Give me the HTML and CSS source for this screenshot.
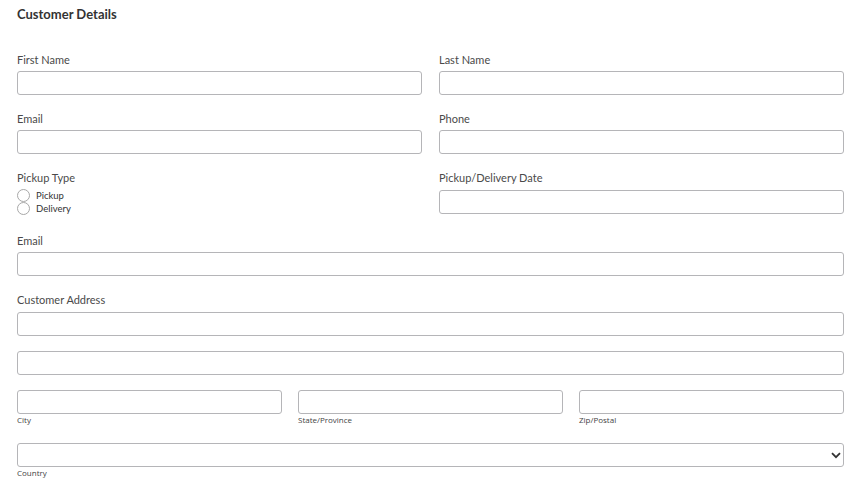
FILE: index.html
```html
<!DOCTYPE html>
<html>
<head>
<meta charset="utf-8">
<link rel="stylesheet" href="styles.css">
</head>
<body>
<form class="form">
  <h2 class="title">Customer Details</h2>
  <div class="grid2">
    <div class="field"><label class="label">First Name</label><input class="input" type="text"></div>
    <div class="field"><label class="label">Last Name</label><input class="input" type="text"></div>
    <div class="field"><label class="label">Email</label><input class="input" type="text"></div>
    <div class="field"><label class="label">Phone</label><input class="input" type="text"></div>
    <div class="field">
      <label class="label">Pickup Type</label>
      <div class="radios">
        <label class="radio"><input type="radio" name="pt" class="radio-input"><span>Pickup</span></label>
        <label class="radio"><input type="radio" name="pt" class="radio-input"><span>Delivery</span></label>
      </div>
    </div>
    <div class="field"><label class="label label-date">Pickup/Delivery Date</label><input class="input" type="text"></div>
  </div>
  <div class="field"><label class="label">Email</label><input class="input" type="text"></div>
  <div class="field address">
    <label class="label">Customer Address</label>
    <input class="input" type="text">
    <input class="input" type="text">
    <div class="grid3">
      <div class="sub"><input class="input" type="text"><span class="sublabel">City</span></div>
      <div class="sub"><input class="input" type="text"><span class="sublabel">State/Province</span></div>
      <div class="sub"><input class="input" type="text"><span class="sublabel">Zip/Postal</span></div>
    </div>
    <div class="sub country">
      <div class="select-wrap">
        <select class="input select"><option></option></select>
        <svg class="chevron" width="10" height="7" viewBox="0 0 10 7"><path d="M1 1.2 L5 5.2 L9 1.2" fill="none" stroke="#333" stroke-width="1.8"/></svg>
      </div>
      <span class="sublabel">Country</span>
    </div>
  </div>
</form>
</body>
</html>
```
FILE: styles.css
```css
html, body {
  margin: 0;
  padding: 0;
  background: #fff;
}
body {
  font-family: Lato, "Liberation Sans", sans-serif;
  color: #3a3a3a;
}
.form {
  padding: 5px 16px 0 17px;
  display: flex;
  flex-direction: column;
  gap: 17px;
}
.title {
  margin: 0 0 13px 0;
  font-size: 13px;
  line-height: 18px;
  font-weight: 700;
  color: #333;
}
.grid2 {
  display: grid;
  grid-template-columns: 1fr 1fr;
  column-gap: 17px;
  row-gap: 17px;
}
.field {
  display: flex;
  flex-direction: column;
}
.label {
  font-size: 11px;
  line-height: 14px;
  margin-bottom: 4px;
  color: #4a4a4a;
}
.label-date {
  margin-bottom: 5px;
}
.input {
  box-sizing: border-box;
  height: 24px;
  width: 100%;
  margin: 0;
  border: 1px solid #b5b5b8;
  border-radius: 3px;
  background: #fff;
  font: inherit;
  padding: 0 6px;
}
.address {
  gap: 15px;
}
.address .label {
  margin-bottom: -10px;
}
.radios {
  display: flex;
  flex-direction: column;
  padding-top: 0;
  padding-bottom: 2px;
}
.radio {
  display: flex;
  align-items: center;
  height: 13px;
  font-size: 9.5px;
  color: #333;
}
.radio-input {
  appearance: none;
  -webkit-appearance: none;
  box-sizing: border-box;
  width: 13px;
  height: 13px;
  margin: 0 6px 0 0;
  border: 1px solid #a8a8a8;
  border-radius: 50%;
  background: #fff;
}
.grid3 {
  display: grid;
  grid-template-columns: 1fr 1fr 1fr;
  column-gap: 16px;
}
.sub {
  display: flex;
  flex-direction: column;
}
.sublabel {
  font-family: "Open Sans", "Liberation Sans", sans-serif;
  font-size: 8px;
  line-height: 12px;
  color: #444;
}
.country {
  margin-top: 2px;
}
.select-wrap {
  position: relative;
}
.select {
  appearance: none;
  -webkit-appearance: none;
  display: block;
}
.chevron {
  position: absolute;
  right: 3px;
  top: 9px;
}
```
